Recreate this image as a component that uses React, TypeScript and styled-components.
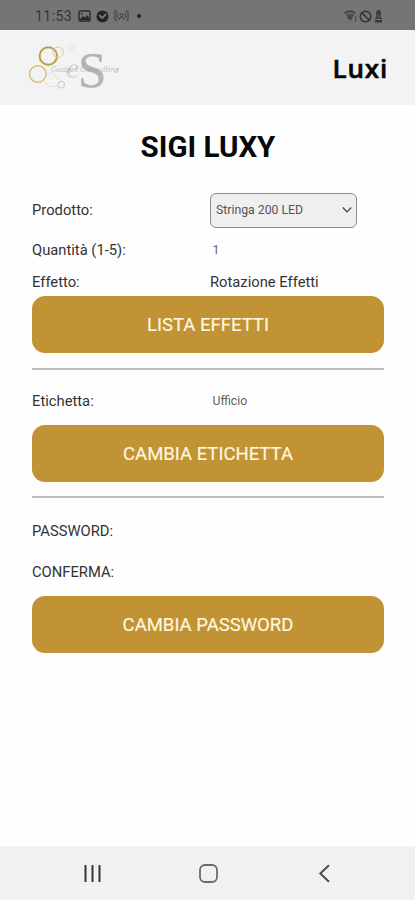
import React from "react";
import styled, { createGlobalStyle } from "styled-components";

const GlobalStyle = createGlobalStyle`
  * { box-sizing: border-box; }
  body { margin: 0; background: #fefefe; font-family: Roboto, sans-serif; color: #222; }
`;

const Screen = styled.div`
  display: flex;
  flex-direction: column;
  height: 900px;
  width: 415px;
  background: #fefefe;
  overflow: hidden;
`;

const StatusBar = styled.div`
  flex: none;
  display: flex;
  align-items: center;
  justify-content: space-between;
  height: 30px;
  padding: 2px 32px 0 35px;
  background: #757575;
  color: #333;
`;

const StatusGroup = styled.div<{ $gap: number }>`
  display: flex;
  align-items: center;
  gap: ${(p) => p.$gap}px;
`;

const Clock = styled.span`
  width: 38px;
  font-size: 14px;
  line-height: 16px;
  letter-spacing: 0.45px;
`;

const Dot = styled.span`
  width: 4px;
  height: 4px;
  margin-left: 3px;
  border-radius: 50%;
  background: #222;
`;

const Header = styled.header`
  flex: none;
  display: flex;
  justify-content: space-between;
  height: 75px;
  padding: 6px 27px 0 20px;
  background: #f3f3f3;
`;

const Brand = styled.span`
  margin-top: 15px;
  font: 600 26px/34px "Open Sans", sans-serif;
  letter-spacing: 0.8px;
  -webkit-text-stroke: 0.6px #080808;
  color: #080808;
`;

const Main = styled.main`
  flex: 1;
  padding: 0 31px 0 32px;
`;

const Title = styled.h1`
  margin: 24px 0 28px;
  text-align: center;
  font-size: 29.5px;
  line-height: 36px;
  font-weight: 700;
  color: #080808;
`;

const Row = styled.div<{ $height: number; $top?: number; $bottom?: number }>`
  display: grid;
  grid-template-columns: 178px 1fr;
  align-items: center;
  height: ${(p) => p.$height}px;
  padding: ${(p) => p.$top ?? 0}px 0 ${(p) => p.$bottom ?? 0}px;
`;

const Label = styled.span<{ $lift?: number }>`
  padding-bottom: ${(p) => p.$lift ?? 0}px;
  font-size: 14.75px;
  line-height: 18px;
  color: #333;
`;

const FieldValue = styled.span`
  padding-left: 2.5px;
  font-size: 12.2px;
  line-height: 16px;
  color: #606060;
`;

const Select = styled.button`
  display: flex;
  align-items: center;
  justify-content: space-between;
  width: 147px;
  height: 35px;
  padding: 0 4px 2px 5px;
  border: 1px solid #8c8c8c;
  border-radius: 6px;
  background: #efefef;
  font: 12.25px/16px Roboto, sans-serif;
  color: #555;
`;

const ActionButton = styled.button`
  display: block;
  width: 100%;
  height: 57px;
  padding: 0;
  border: 0;
  border-radius: 13px;
  background: #c19335;
  color: #fff6df;
  font: 400 18.5px/24px Roboto, sans-serif;
  -webkit-text-stroke: 0.2px #fff6df;
`;

const Divider = styled.hr<{ $top: number }>`
  height: 2px;
  margin: ${(p) => p.$top}px 0 0;
  border: 0;
  background: #bebebe;
`;

const NavBar = styled.nav`
  flex: none;
  display: flex;
  justify-content: space-between;
  align-items: center;
  height: 54px;
  padding: 1px 80px 0 82px;
  background: #f1f1f1;
`;

const Logo = () => (
  <svg width="105" height="60" viewBox="0 0 105 60" fill="none">
    <circle cx="28.3" cy="20" r="8.7" stroke="#bd9c46" strokeWidth="2" />
    <circle cx="38" cy="16.3" r="5.3" stroke="#d8cba5" />
    <circle cx="17.8" cy="38" r="8.3" stroke="#d9bd6c" strokeWidth="1.4" />
    <circle cx="51" cy="11.5" r="2.8" stroke="#dedede" strokeWidth=".8" />
    <circle cx="41.2" cy="48.7" r="3.4" stroke="#c9c6b9" />
    <path d="M27 37h6l6 7M25 46q5 7 12 4" stroke="#dedbd0" strokeWidth=".8" />
    <text x="46" y="42" fontFamily="Liberation Serif" fontStyle="italic" fontSize="30" fill="#dadada">e</text>
    <text x="58" y="51" fontFamily="Liberation Serif" fontSize="51" fill="#b4b4b4" stroke="#b4b4b4" strokeWidth=".5">S</text>
    <text x="31" y="35.5" fontFamily="Lato" fontSize="7.5" fontWeight="300" fontStyle="italic" fill="#a8a8a8" textLength="68" lengthAdjust="spacingAndGlyphs">Gadget Consulting</text>
  </svg>
);

const PictureIcon = () => (
  <svg width="13" height="12" viewBox="0 0 13 12" fill="none">
    <rect x="1" y="1" width="11" height="10" rx="1" stroke="#292929" strokeWidth="1.4" />
    <path d="m2 9 3-3 2 1.5L9 5l3 4v1H2z" fill="#292929" />
    <circle cx="4" cy="3.8" r=".9" fill="#292929" />
  </svg>
);

const CheckBadgeIcon = () => (
  <svg width="13" height="13" viewBox="0 0 13 13">
    <circle cx="6.5" cy="6.5" r="6" fill="#252525" />
    <path d="m3.2 5 3 3 3.8-3.8" stroke="#858585" strokeWidth="1.7" fill="none" />
  </svg>
);

const BroadcastIcon = () => (
  <svg width="15" height="12" viewBox="0 0 15 12" fill="none" stroke="#3d3d3d" strokeWidth="1">
    <path d="M3 1H1v9h2M12 1h2v9h-2M4.5 2.5 3.2 4v3l1.3 1.5M10.5 2.5 11.8 4v3l-1.3 1.5" />
    <circle cx="7.5" cy="5.3" r="1.5" />
    <path d="m6.5 7-1.5 3M8.5 7l1.5 3" />
  </svg>
);

const WifiIcon = () => (
  <svg width="13" height="13" viewBox="0 0 13 13" fill="none" stroke="#454545">
    <path d="M.5 3.5q5.5-4.5 11 0M2.5 6q3.5-3 7 0" strokeWidth="1.8" />
    <path d="m3.5 7.3 2.5 3 2.5-3q-2.5-1.7-5 0Z" fill="#454545" />
    <path d="M11.7 6v6" />
  </svg>
);

const BlockedIcon = () => (
  <svg width="13" height="13" viewBox="0 0 13 13" fill="none" stroke="#303030" strokeWidth="1.4">
    <circle cx="6.5" cy="6.5" r="5.3" />
    <path d="m3 3 7 7" />
  </svg>
);

const BatteryIcon = () => (
  <svg width="9" height="13" viewBox="0 0 9 13" fill="#373737">
    <path d="M3.2 0h2.6v1.5h1V8H8v1H1V8h1.2V1.5h1zM1 10h7v2.5H1z" />
    <path d="m5 3-2 3h3L4 9" fill="none" stroke="#666" strokeWidth=".8" />
  </svg>
);

const ChevronIcon = () => (
  <svg width="10" height="7" viewBox="0 0 10 7" fill="none">
    <path d="m.8 1.5 4.2 4.3 4.2-4.3" stroke="#404040" strokeWidth="1.2" />
  </svg>
);

const RecentsIcon = () => (
  <svg width="21" height="21" viewBox="0 0 21 21">
    <path d="M3.5 2v17M10.5 2v17M17.5 2v17" stroke="#373737" strokeWidth="2" />
  </svg>
);

const HomeIcon = () => (
  <svg width="21" height="21" viewBox="0 0 21 21">
    <rect x="2" y="2" width="17" height="17" rx="5" fill="none" stroke="#6b6b6b" strokeWidth="1.8" />
  </svg>
);

const BackIcon = () => (
  <svg width="21" height="21" viewBox="0 0 21 21">
    <path d="M15 2.2 6.3 10.5 15 18.8" fill="none" stroke="#484848" strokeWidth="1.9" />
  </svg>
);

export default function App() {
  return (
    <Screen>
      <GlobalStyle />
      <StatusBar>
        <StatusGroup $gap={5}>
          <Clock>11:53</Clock>
          <PictureIcon />
          <CheckBadgeIcon />
          <BroadcastIcon />
          <Dot />
        </StatusGroup>
        <StatusGroup $gap={2}>
          <WifiIcon />
          <BlockedIcon />
          <BatteryIcon />
        </StatusGroup>
      </StatusBar>
      <Header>
        <Logo />
        <Brand>Luxi</Brand>
      </Header>
      <Main>
        <Title>SIGI LUXY</Title>
        <Row $height={35}>
          <Label $lift={2}>Prodotto:</Label>
          <Select>
            Stringa 200 LED
            <ChevronIcon />
          </Select>
        </Row>
        <Row $height={44}>
          <Label>Quantità (1-5):</Label>
          <FieldValue>1</FieldValue>
        </Row>
        <Row $height={24} $bottom={4}>
          <Label>Effetto:</Label>
          <Label>Rotazione Effetti</Label>
        </Row>
        <ActionButton>LISTA EFFETTI</ActionButton>
        <Divider $top={15} />
        <Row $height={55} $top={7}>
          <Label>Etichetta:</Label>
          <FieldValue>Ufficio</FieldValue>
        </Row>
        <ActionButton>CAMBIA ETICHETTA</ActionButton>
        <Divider $top={14} />
        <Row $height={64} $top={2}>
          <Label>PASSWORD:</Label>
        </Row>
        <Row $height={34} $bottom={14}>
          <Label>CONFERMA:</Label>
        </Row>
        <ActionButton>CAMBIA PASSWORD</ActionButton>
      </Main>
      <NavBar>
        <RecentsIcon />
        <HomeIcon />
        <BackIcon />
      </NavBar>
    </Screen>
  );
}
